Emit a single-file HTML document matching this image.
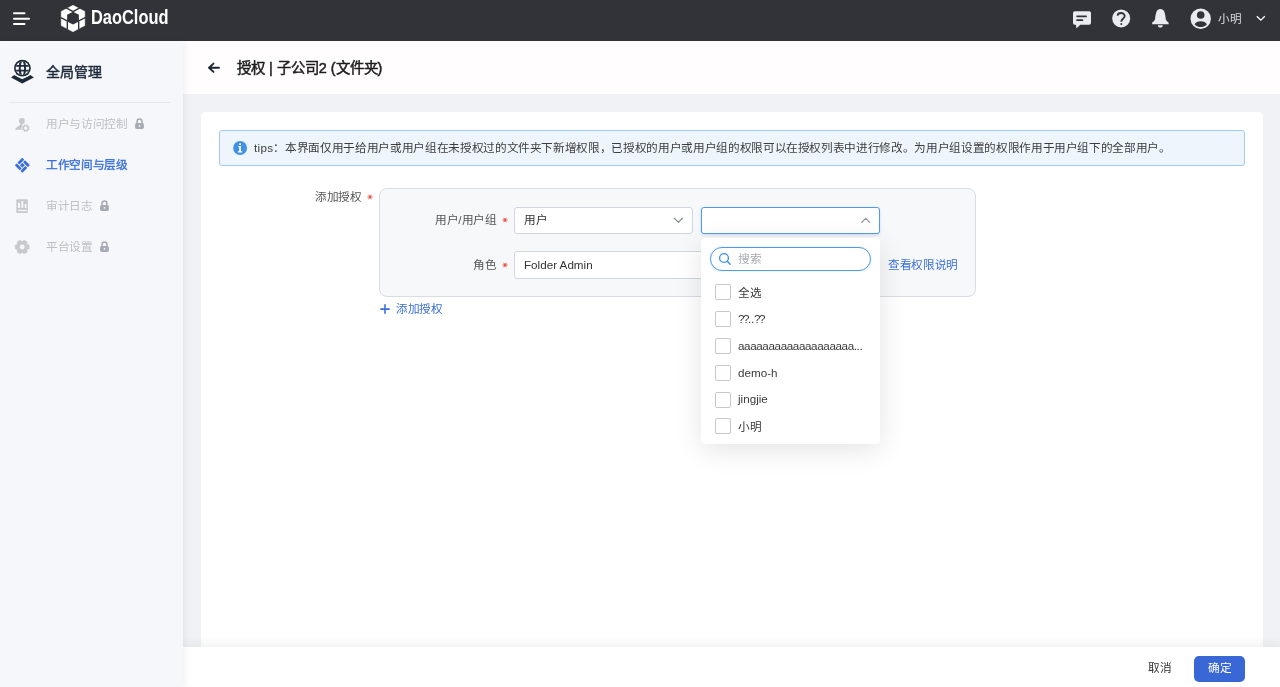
<!DOCTYPE html>
<html lang="zh-CN"><head><meta charset="utf-8">
<style>
*{box-sizing:border-box;margin:0;padding:0}
body{will-change:transform}html,body{width:1280px;height:687px;overflow:hidden;font-family:"Liberation Sans",sans-serif;background:#f0f2f5;position:relative}
.abs{position:absolute}
svg{position:absolute;overflow:visible}
#top{left:0;top:0;width:1280px;height:41px;background:#323338}
#side{left:0;top:41px;width:183px;height:646px;background:#f5f7fb;box-shadow:2px 0 6px rgba(0,0,0,0.06)}
#hdr{left:183px;top:41px;width:1097px;height:53px;background:#fffdfd}
#card{left:201px;top:112px;width:1062px;height:540px;background:#fff;border-radius:4px}
#foot{left:183px;top:647px;width:1097px;height:40px;background:#fff;box-shadow:0 -4px 9px rgba(0,0,0,0.055)}
.t{position:absolute;white-space:nowrap;line-height:12px;font-size:12px;transform:translateY(0.6px) scale(0.971);transform-origin:0 0}
.menu{color:#bcbfc5}
.lock{position:absolute;width:9px;height:11px}
.req{position:absolute;color:#e0332c;font-size:14px;line-height:14px;font-weight:bold}
.sel{position:absolute;background:#fff;border:1px solid #d2d5db;border-radius:3px}
.cb{position:absolute;left:715px;width:16px;height:16px;border:1px solid #c4c8cf;border-radius:2px;background:#fff}
.it{position:absolute;left:738px;transform:translateY(0.5px) scale(0.971);transform-origin:0 0;font-size:12px;line-height:12px;color:#3a3a3a;white-space:nowrap}
</style></head><body>
<div id="top" class="abs"></div>
<div id="hdr" class="abs"></div>
<div id="card" class="abs"></div>
<div id="foot" class="abs"></div>
<div id="side" class="abs"></div>

<!-- top bar -->
<svg style="left:0;top:0" width="100" height="41" viewBox="0 0 100 41">
  <g stroke="#fff" stroke-width="2" stroke-linecap="round">
    <line x1="14" y1="13.3" x2="24.5" y2="13.3"/>
    <line x1="14" y1="18.8" x2="29" y2="18.8"/>
    <line x1="14" y1="24" x2="24.5" y2="24"/>
  </g>
</svg>
<svg style="left:0;top:0" width="100" height="41" viewBox="0 0 100 41">
  <g transform="translate(73,5.3) scale(0.98,1.015) translate(-73,-5)">
    <polygon points="73,5 85,11 85,25 73,31 61,25 61,11" fill="#fff" stroke="#fff" stroke-width="0.5" stroke-linejoin="round"/>
    <polygon points="73,11.3 79,14.3 79,21 73,24 67,21 67,14.3" fill="#323338"/>
    <g stroke="#323338" stroke-width="1.4" fill="none">
      <polyline points="65.2,7.1 73,11.2 80.8,7.1"/>
      <polyline points="60,16.8 67.2,20.4 67.2,29"/>
      <polyline points="86,16.8 78.8,20.4 78.8,29"/>
    </g>
  </g>
</svg>
<div class="t" style="left:91px;top:7px;font-size:20px;line-height:20px;font-weight:bold;color:#fff;transform:scaleX(0.82);transform-origin:0 0">DaoCloud</div>

<!-- right icons -->
<svg style="left:1073px;top:11px" width="18" height="17" viewBox="0 0 18 17">
  <path d="M1.8 0.2H16.2A1.8 1.8 0 0 1 18 2V12A1.8 1.8 0 0 1 16.2 13.8H7.3L3.9 16.9H3.4L2.9 13.8H1.8A1.8 1.8 0 0 1 0 12V2A1.8 1.8 0 0 1 1.8 0.2Z" fill="#e9ebf1"/>
  <g stroke="#323338" stroke-width="1.75" stroke-linecap="round"><line x1="4.1" y1="5.3" x2="13.1" y2="5.3"/><line x1="4.1" y1="9.2" x2="9.4" y2="9.2"/></g>
</svg>
<svg style="left:1111px;top:9px" width="20" height="20" viewBox="0 0 20 20">
  <circle cx="10.2" cy="9.4" r="9" fill="#e9ebf1"/>
  <path d="M6.5 6.6C6.7 4.9 8.1 4 10.1 4C12.2 4 13.7 5.3 13.7 7C13.7 8.5 12.8 9.2 11.8 10C10.8 10.8 10.3 11.5 10.3 12.8" fill="none" stroke="#323338" stroke-width="1.8"/>
  <rect x="9.45" y="14.2" width="1.75" height="1.7" fill="#323338"/>
</svg>
<svg style="left:1148px;top:6px" width="24" height="24" viewBox="0 0 24 24">
  <path d="M12.4 3.1C10.2 3.1 8.9 4.6 8.4 6C7.4 8.8 7.3 11.5 7 13.2C6.7 14.8 5 15.8 4.2 16.4V18.2H20.6V16.4C19.8 15.8 18.1 14.8 17.8 13.2C17.5 11.5 17.4 8.8 16.4 6C15.9 4.6 14.6 3.1 12.4 3.1Z" fill="#e9ebf1"/>
  <path d="M9.8 19.3H14.9C14.7 20.8 13.7 21.6 12.35 21.6C11 21.6 10 20.8 9.8 19.3Z" fill="#e9ebf1"/>
</svg>
<svg style="left:1190px;top:8px" width="22" height="22" viewBox="0 0 22 22">
  <circle cx="10.7" cy="10.8" r="10.2" fill="#e8eaf0"/>
  <circle cx="10.7" cy="7" r="3.8" fill="#323338"/>
  <path d="M4.6 16.2C5.5 14.2 8 13.2 10.7 13.2S15.9 14.2 16.9 16.2C15.5 18.1 13.2 19 10.7 19S5.9 18.1 4.6 16.2Z" fill="#323338"/>
</svg>
<div class="t" style="left:1218px;top:12.6px;color:#d6d7db">小明</div>
<svg style="left:1255px;top:14px" width="12" height="9" viewBox="0 0 12 9">
  <path d="M1.8 2.2L5.8 6.2L9.8 2.2" fill="none" stroke="#fff" stroke-width="1.3"/>
</svg>

<!-- sidebar -->
<svg style="left:8px;top:55px" width="30" height="32" viewBox="0 0 30 32">
  <defs><clipPath id="gc"><circle cx="14.4" cy="13.2" r="6.7"/></clipPath></defs>
  <path d="M3 22.4L6.3 20L14.2 24.2L22.4 20L25.9 22.4L14.2 28.6Z" fill="#1e2a3a"/>
  <circle cx="14.4" cy="13.2" r="9.9" fill="#fcfdfe"/>
  <circle cx="14.4" cy="13.2" r="8.4" fill="#1e2a3a"/>
  <g clip-path="url(#gc)">
    <rect x="6" y="5" width="17" height="17" fill="#fcfdfe"/>
    <g stroke="#1e2a3a" fill="none">
      <ellipse cx="14.4" cy="13.2" rx="2.65" ry="7.9" stroke-width="1.95"/>
      <line x1="5" y1="10.8" x2="24" y2="10.8" stroke-width="1.8"/>
      <line x1="5" y1="15.7" x2="24" y2="15.7" stroke-width="1.8"/>
    </g>
  </g>
</svg>
<div class="t" style="left:46px;top:65px;font-size:14px;line-height:15px;font-weight:normal;-webkit-text-stroke:0.45px #1e2a3a;color:#1e2a3a;transform:none">全局管理</div>
<div class="abs" style="left:9px;top:102px;width:161px;height:1px;background:#e4e6eb"></div>

<svg style="left:14px;top:117px" width="18" height="16" viewBox="0 0 18 16">
  <circle cx="7.9" cy="3.9" r="2.95" fill="#c6c7ca"/>
  <path d="M0.8 12.8C1.8 10.8 4 9.5 5.5 8.6C6 8.2 6.3 7.6 6.6 6.6L8.8 6.6C8.3 8.5 7.6 10 7.2 12.8Z" fill="#c6c7ca"/>
  <g transform="translate(7.6,7)"><polygon points="7.07,4.54 7.97,5.10 7.55,6.13 6.51,5.88 5.88,6.51 6.13,7.55 5.10,7.97 4.54,7.07 3.66,7.07 3.10,7.97 2.07,7.55 2.32,6.51 1.69,5.88 0.65,6.13 0.23,5.10 1.13,4.54 1.13,3.66 0.23,3.10 0.65,2.07 1.69,2.32 2.32,1.69 2.07,0.65 3.10,0.23 3.66,1.13 4.54,1.13 5.10,0.23 6.13,0.65 5.88,1.69 6.51,2.32 7.55,2.07 7.97,3.10 7.07,3.66" fill="#c6c7ca" stroke="#f5f7fb" stroke-width="0.6" paint-order="stroke"/>
  <circle cx="4.1" cy="4.1" r="1.8" fill="#f5f7fb"/></g>
</svg>
<div class="t menu" style="left:46px;top:118px">用户与访问控制</div>
<svg class="lock" style="left:135px;top:118px" viewBox="0 0 9 11"><path d="M2.05 5.4V3.4A2.45 2.45 0 0 1 6.95 3.4V5.4" fill="none" stroke="#a6aab2" stroke-width="1.5"/><rect x="0.1" y="5" width="8.8" height="5.9" rx="1.6" fill="#a6aab2"/><rect x="3.75" y="7.1" width="1.5" height="1.6" fill="#f5f7fb"/></svg>

<svg style="left:14px;top:157px" width="17" height="17" viewBox="0 0 17 17">
  <g transform="translate(8.35,8.25) rotate(45)" fill="#3a70d9">
    <rect x="-5.35" y="-5.35" width="2.8" height="7.1" rx="0.9"/>
    <rect x="-1.75" y="-5.35" width="7.1" height="2.8" rx="0.9"/>
    <rect x="2.55" y="-1.75" width="2.8" height="7.1" rx="0.9"/>
    <rect x="-5.35" y="2.55" width="7.1" height="2.8" rx="0.9"/>
    <rect x="-1.75" y="-1.75" width="3.5" height="3.5"/>
  </g>
</svg>
<div class="t" style="left:46px;top:159px;-webkit-text-stroke:0.35px #3a70d9;color:#3a70d9">工作空间与层级</div>

<svg style="left:16px;top:199px" width="13" height="15" viewBox="0 0 13 15">
  <rect x="0.3" y="0.2" width="11.5" height="13.8" rx="0.8" fill="#c8c9cc"/>
  <g fill="#f5f7fb"><rect x="2" y="3.7" width="2.1" height="5.3" rx="0.4"/><rect x="5.4" y="2" width="1.9" height="7" rx="0.4"/><rect x="8.7" y="5.1" width="1.7" height="3.9" rx="0.4"/><rect x="2" y="10.9" width="8.8" height="1.2"/></g>
</svg>
<div class="t menu" style="left:46px;top:200px">审计日志</div>
<svg class="lock" style="left:100px;top:200px" viewBox="0 0 9 11"><path d="M2.05 5.4V3.4A2.45 2.45 0 0 1 6.95 3.4V5.4" fill="none" stroke="#a6aab2" stroke-width="1.5"/><rect x="0.1" y="5" width="8.8" height="5.9" rx="1.6" fill="#a6aab2"/><rect x="3.75" y="7.1" width="1.5" height="1.6" fill="#f5f7fb"/></svg>

<svg style="left:15px;top:240px" width="15" height="15" viewBox="0 0 15 15">
  <polygon points="11.96,4.68 14.06,5.16 14.06,8.84 11.96,9.32 11.59,9.96 12.22,12.02 9.04,13.86 7.57,12.29 6.83,12.29 5.36,13.86 2.18,12.02 2.81,9.96 2.44,9.32 0.34,8.84 0.34,5.16 2.44,4.68 2.81,4.04 2.18,1.98 5.36,0.14 6.83,1.71 7.57,1.71 9.04,0.14 12.22,1.98 11.59,4.04" fill="#c8c9cc" stroke="#c8c9cc" stroke-width="0.8" stroke-linejoin="round"/>
  <circle cx="7.2" cy="7" r="2.45" fill="#f5f7fb"/>
</svg>
<div class="t menu" style="left:46px;top:241px">平台设置</div>
<svg class="lock" style="left:100px;top:241px" viewBox="0 0 9 11"><path d="M2.05 5.4V3.4A2.45 2.45 0 0 1 6.95 3.4V5.4" fill="none" stroke="#a6aab2" stroke-width="1.5"/><rect x="0.1" y="5" width="8.8" height="5.9" rx="1.6" fill="#a6aab2"/><rect x="3.75" y="7.1" width="1.5" height="1.6" fill="#f5f7fb"/></svg>

<!-- header -->
<svg style="left:207px;top:62px" width="14" height="12" viewBox="0 0 14 12">
  <path d="M12.0 5.75H2.2M6.5 1.6L2.0 5.75L6.5 9.9" fill="none" stroke="#1a2436" stroke-width="1.85" stroke-linecap="round" stroke-linejoin="round"/>
</svg>
<div class="t" style="left:237px;top:61px;font-size:14.4px;line-height:15px;font-weight:normal;-webkit-text-stroke:0.5px #1f1f1f;color:#1f1f1f;transform:none">授权 | 子公司2 (文件夹)</div>

<!-- tips -->
<div class="abs" style="left:219px;top:130px;width:1026px;height:36px;background:#eef5fc;border:1px solid #9fcbf1;border-radius:3px"></div>
<svg style="left:233px;top:141px" width="15" height="15" viewBox="0 0 15 15">
  <circle cx="7.1" cy="7" r="6.95" fill="#4292e3"/>
  <rect x="6.2" y="2.2" width="1.75" height="1.7" rx="0.3" fill="#fff"/>
  <path d="M5.3 5.1H7.95V10.2H9.2V11.4H4.9V10.2H6.2V6.2H5.3Z" fill="#fff"/>
</svg>
<div class="t" style="left:254px;top:142px;color:#3d3d3d"><span style="letter-spacing:0.35px">tips</span>：本界面仅用于给用户或用户组在未授权过的文件夹下新增权限，已授权的用户或用户组的权限可以在授权列表中进行修改。为用户组设置的权限作用于用户组下的全部用户。</div>

<!-- form -->
<div class="t" style="left:315px;top:191px;color:#555">添加授权</div>
<svg style="left:367.2px;top:194.2px" width="6" height="6" viewBox="-3 -3 6 6"><g stroke="#e4483f" stroke-width="0.95" stroke-linecap="round"><line x1="-2.2" y1="0" x2="2.2" y2="0"/><line x1="-1.1" y1="-1.9" x2="1.1" y2="1.9"/><line x1="1.1" y1="-1.9" x2="-1.1" y2="1.9"/></g></svg>
<div class="abs" style="left:379px;top:188px;width:597px;height:109px;background:#f7f8fa;border:1px solid #d9dce2;border-radius:8px"></div>

<div class="t" style="left:435px;top:214px;color:#555">用户/用户组</div>
<svg style="left:502.1px;top:217.4px" width="6" height="6" viewBox="-3 -3 6 6"><g stroke="#e4483f" stroke-width="0.95" stroke-linecap="round"><line x1="-2.2" y1="0" x2="2.2" y2="0"/><line x1="-1.1" y1="-1.9" x2="1.1" y2="1.9"/><line x1="1.1" y1="-1.9" x2="-1.1" y2="1.9"/></g></svg>
<div class="sel" style="left:514px;top:207px;width:179px;height:27px"></div>
<div class="t" style="left:524px;top:214px;color:#333">用户</div>
<svg style="left:672px;top:216px" width="12" height="9" viewBox="0 0 12 9"><path d="M2.3 2.3L6.4 6.4L10.5 2.3" fill="none" stroke="#8d929b" stroke-width="1.3" stroke-linecap="round" stroke-linejoin="round"/></svg>

<div class="t" style="left:473px;top:259px;color:#555">角色</div>
<svg style="left:502.1px;top:261.8px" width="6" height="6" viewBox="-3 -3 6 6"><g stroke="#e4483f" stroke-width="0.95" stroke-linecap="round"><line x1="-2.2" y1="0" x2="2.2" y2="0"/><line x1="-1.1" y1="-1.9" x2="1.1" y2="1.9"/><line x1="1.1" y1="-1.9" x2="-1.1" y2="1.9"/></g></svg>
<div class="sel" style="left:514px;top:251px;width:240px;height:28px"></div>
<div class="t" style="left:524px;top:258.8px;color:#333">Folder Admin</div>
<div class="t" style="left:888px;top:259px;color:#3a6fd8">查看权限说明</div>

<svg style="left:380px;top:304px" width="10" height="10" viewBox="0 0 10 10"><path d="M5 0.9V9.3M0.8 5.1H9.2" stroke="#3a6fd8" stroke-width="1.6" stroke-linecap="round"/></svg>
<div class="t" style="left:396px;top:303px;color:#3a6fd8">添加授权</div>

<!-- select 2 -->
<div class="abs" style="left:701px;top:207px;width:179px;height:27px;background:#fff;border:1px solid #529ae8;border-radius:3px;box-shadow:0 1px 3px rgba(74,144,226,0.25)"></div>
<svg style="left:860px;top:215px" width="12" height="9" viewBox="0 0 12 9"><path d="M1.7 7.4L5.7 3.4L9.7 7.4" fill="none" stroke="#8d929b" stroke-width="1.3" stroke-linecap="round" stroke-linejoin="round"/></svg>

<!-- dropdown -->
<div class="abs" style="left:701px;top:238px;width:179px;height:206px;background:#fff;border-radius:4px;box-shadow:0 6px 28px rgba(0,0,0,0.11)"></div>
<div class="abs" style="left:710px;top:247px;width:161px;height:24px;background:#fff;border:1px solid #529ae8;border-radius:12px;box-shadow:0 0 2px rgba(82,154,232,0.35)"></div>
<svg style="left:718px;top:252px" width="14" height="14" viewBox="0 0 14 14"><circle cx="6" cy="6" r="4.4" fill="none" stroke="#3f8fe2" stroke-width="1.35"/><path d="M9.3 9.3L12.2 12.2" stroke="#3f8fe2" stroke-width="1.5" stroke-linecap="round"/></svg>
<div class="t" style="left:738px;top:253px;color:#a8abb1">搜索</div>

<div class="cb" style="top:284px"></div><div class="it" style="top:287px">全选</div>
<div class="cb" style="top:311px"></div><div class="it" style="top:313px"><span style="letter-spacing:-1.5px">??</span><span style="letter-spacing:-0.3px">..</span><span style="letter-spacing:-1.5px">??</span></div>
<div class="cb" style="top:338px"></div><div class="it" style="top:340px;letter-spacing:-0.4px">aaaaaaaaaaaaaaaaaaa...</div>
<div class="cb" style="top:365px"></div><div class="it" style="top:367px">demo-h</div>
<div class="cb" style="top:392px"></div><div class="it" style="top:393px">jingjie</div>
<div class="cb" style="top:418px"></div><div class="it" style="top:421px">小明</div>

<!-- footer -->
<div class="t" style="left:1148px;top:662px;color:#333">取消</div>
<div class="abs" style="left:1194px;top:656px;width:51px;height:26px;background:#3a67d6;border-radius:5px"></div>
<div class="t" style="left:1208px;top:662px;color:#fff">确定</div>
</body></html>
